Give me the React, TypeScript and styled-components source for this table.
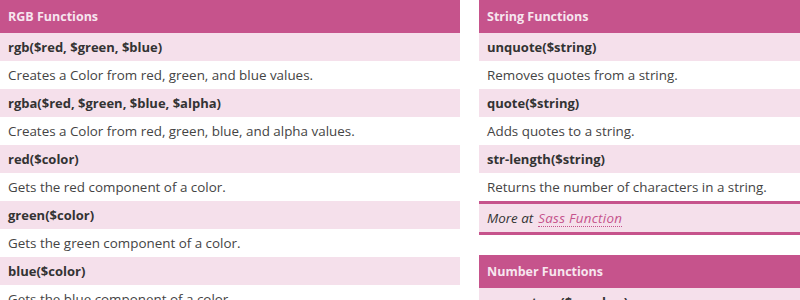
import React from "react";
import styled, { createGlobalStyle } from "styled-components";

const Global = createGlobalStyle`
  html, body { margin: 0; padding: 0; overflow: hidden; background: #fff; }
  body { font-family: "Open Sans", "Liberation Sans", sans-serif; font-size: 13px; color: #333; }
`;

const Page = styled.div`
  display: flex;
  align-items: flex-start;
  gap: 19px;
  width: 939px;
`;

const Column = styled.div`
  display: flex;
  flex-direction: column;
  gap: 20px;
  width: 460px;
  flex: none;
`;

const Card = styled.section`
  display: flex;
  flex-direction: column;
`;

const Header = styled.h3`
  margin: 0;
  height: 33px;
  display: flex;
  align-items: center;
  padding: 0 8px;
  background: #c6538c;
  color: #f7e6ef;
  font-size: 12.5px;
  font-weight: 700;
`;

const Row = styled.div<{ $sig?: boolean }>`
  height: 28px;
  display: flex;
  align-items: center;
  padding: 0 8px;
  background: ${(p) => (p.$sig ? "#f5e0eb" : "#fff")};
  font-weight: ${(p) => (p.$sig ? 700 : 400)};
  font-size: ${(p) => (p.$sig ? "13px" : "13.4px")};
  color: ${(p) => (p.$sig ? "#333" : "#444")};
  white-space: nowrap;
`;

const More = styled.div`
  height: 28px;
  display: flex;
  align-items: center;
  padding: 0 8px;
  background: #f5e0eb;
  border-top: 3px solid #c6538c;
  border-bottom: 3px solid #c6538c;
  font-style: italic;
  font-size: 13.4px;
  color: #333;
  gap: 5px;
`;

const Link = styled.a`
  color: #c6538c;
  text-decoration: none;
  border-bottom: 1px dotted #c6538c;
  line-height: 16px;
  letter-spacing: 0.3px;
`;

type Fn = [string, string];

const rgb: Fn[] = [
  ["rgb($red, $green, $blue)", "Creates a Color from red, green, and blue values."],
  ["rgba($red, $green, $blue, $alpha)", "Creates a Color from red, green, blue, and alpha values."],
  ["red($color)", "Gets the red component of a color."],
  ["green($color)", "Gets the green component of a color."],
  ["blue($color)", "Gets the blue component of a color."],
  ["mix($color1, $color2, [$weight])", "Mixes two colors together."],
];

const str: Fn[] = [
  ["unquote($string)", "Removes quotes from a string."],
  ["quote($string)", "Adds quotes to a string."],
  ["str-length($string)", "Returns the number of characters in a string."],
];

const num: Fn[] = [["percentage($number)", "Converts a unitless number to a percentage."]];

const FnList = ({ items }: { items: Fn[] }) => (
  <>
    {items.map(([sig, desc]) => (
      <React.Fragment key={sig}>
        <Row $sig>{sig}</Row>
        <Row>{desc}</Row>
      </React.Fragment>
    ))}
  </>
);

export default function App() {
  return (
    <>
      <Global />
      <Page>
        <Column>
          <Card>
            <Header>RGB Functions</Header>
            <FnList items={rgb} />
          </Card>
        </Column>
        <Column>
          <Card>
            <Header>String Functions</Header>
            <FnList items={str} />
            <More>
              More at <Link href="#">Sass Function</Link>
            </More>
          </Card>
          <Card>
            <Header>Number Functions</Header>
            <FnList items={num} />
          </Card>
        </Column>
      </Page>
    </>
  );
}
